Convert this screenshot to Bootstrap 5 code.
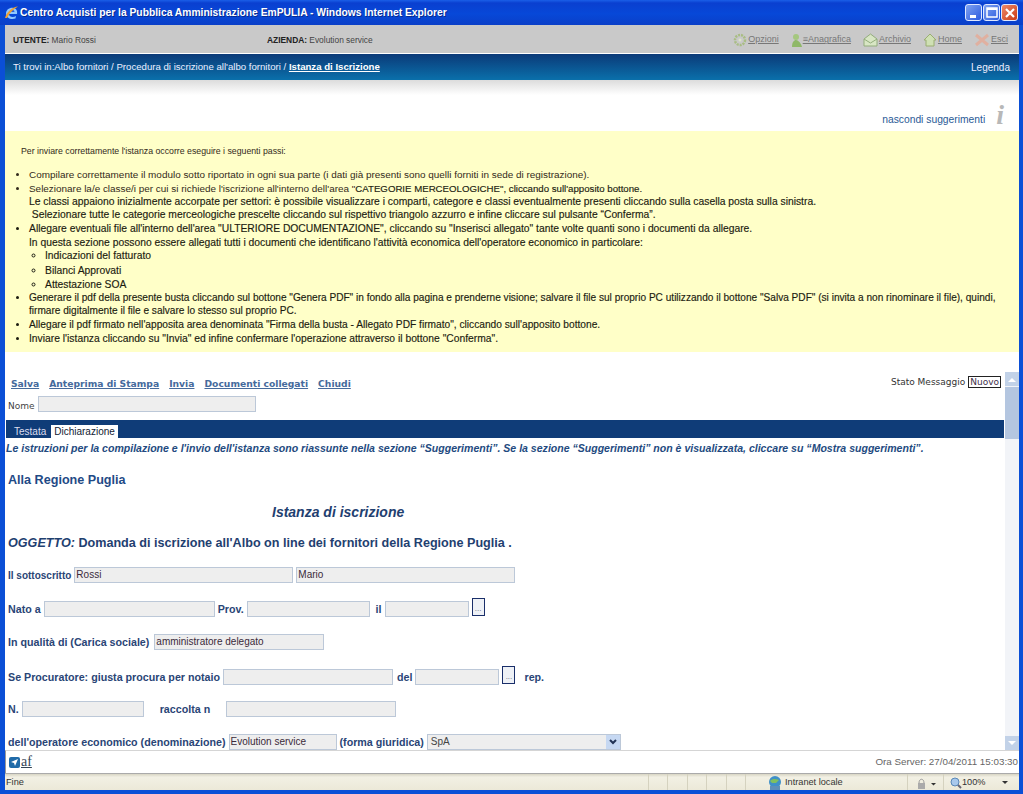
<!DOCTYPE html>
<html lang="it">
<head>
<meta charset="utf-8">
<title>Centro Acquisti per la Pubblica Amministrazione EmPULIA</title>
<link href="https://cdn.jsdelivr.net/npm/bootstrap@5.3.0/dist/css/bootstrap.min.css" rel="stylesheet">
<style>
html,body{margin:0;height:794px;overflow:hidden;background:#fff}
body{font-family:"Liberation Sans",Arial,sans-serif;font-size:10px;color:#222}
.win{width:1023px;height:794px;background:#0b4fd6;padding:0 4px 4px 5px;overflow:hidden}
.pg{background:#fff;height:765px;flex:none}
.ttl{height:25px;flex:none;margin:0 -4px 0 -5px;padding:0 5px 0 4px;background:linear-gradient(#1a5fe8 0,#0a3fd0 12%,#0748d8 55%,#0a3fc8 100%);color:#fff}
.ttl-text{font-family:"Liberation Sans",sans-serif;font-size:10.3px;font-weight:700;text-shadow:1px 1px 0 #062a90;margin-left:0}
.wbtn{width:17px;height:17px;border:1px solid #dfe8ff;border-radius:3px;background:linear-gradient(135deg,#7fa2f0,#2c5be0);margin-left:1px}
.wbtn.cl{background:linear-gradient(135deg,#ee8a6a,#c93a14)}
.usr{height:28px;background:#c9c9c9;padding:2px 11px 0 8px;color:#444;font-size:8.4px}
.usr b{color:#222}
.azi{width:254px}
.tool{color:#777;text-decoration:underline;font-size:9px;margin-left:12px;display:flex;align-items:center}
.tool svg{margin-right:1px}
.crumb{height:26px;margin-top:1px;padding:1px 9px 0 8px;background:linear-gradient(#0b3a78,#0a70ab);color:#eef;font-size:9.65px}
.crumb u{font-weight:700;color:#fff}
.crumb .lgd{font-size:10px}
.shade{height:15px;background:linear-gradient(#dcdcdc,#fff)}
.hint{height:36px;padding-right:15px;color:#2a5a96;font-size:10.3px}
.hint-i{font-family:"Liberation Serif",serif;font-style:italic;font-size:28px;line-height:28px;color:#b8b8b8;margin:0 0 2px 11px;font-weight:700}
.yel{height:221px;background:#ffffc8;padding:14px 0 0 16px;color:#332a1a;font-size:9.93px}
.yel p{margin:0 0 10px 0;font-size:8.75px;line-height:13px}
.yel ul{margin:0;padding:0 0 0 8px;list-style:disc;line-height:13.2px}
.yel ul ul{list-style:circle;padding-left:16px;line-height:14px;margin:0 0 -2px 0}
.yel li{margin-bottom:.8px}
.dk{font-size:10.32px;color:#1c1c10;-webkit-text-stroke:.15px #1c1c10}
.dk2{font-size:9.66px;color:#1c1c10;-webkit-text-stroke:.15px #1c1c10}
.dk3{font-size:10.1px}
.dk4{font-size:10.2px}
.gap{height:20px}
.body-row{height:378px}
.fmain{width:999px;overflow:hidden;height:378px;flex:none}
.acts{padding:0 0 2px 6px;height:24px}
.acts a{font-family:"DejaVu Sans",sans-serif;font-size:9.2px;font-weight:700;color:#456a9c;margin-right:10px}
.stato{font-family:"DejaVu Sans",sans-serif;font-size:9px;color:#333;margin-right:3px}
.stato span{border:1px solid #222;padding:0 1px;margin-left:3px;color:#40304a}
.nome{padding-left:3px;height:24px;font-family:"DejaVu Sans",sans-serif;font-size:9px;color:#444;gap:3px}
.fld{display:block;height:16px;background:#eee;border:1px solid #bcc8d8;color:#3a2a3a;font-size:10px;font-weight:400;line-height:14px;padding:0 1px;flex:none;overflow:hidden;white-space:nowrap}
.tabs{height:18px;background:#0f3c78;margin-left:1px;padding:5px 0 0 4px;font-size:10px;line-height:13px}
.tab-a{color:#dde;padding:0 4px;margin-right:1px}
.tab-b{color:#123;background:#fff;padding:0 3px;display:inline-block}
.frm{padding-left:3px;color:#2a4576;font-weight:700;font-size:10.7px}
.note{font-style:italic;font-size:10.55px;color:#234a80;margin:4px 0 0 -2px;line-height:13px;white-space:nowrap}
.h-a{font-size:12.6px;margin:18px 0 0 0;line-height:14px;color:#1f4a86}
.h-b{font-size:14px;font-style:italic;margin:16px 0 0 264px;line-height:18px;color:#1f4070}
.h-c{font-size:12.6px;margin:13px 0 0 0;line-height:18px;color:#1f4070}
.frow{height:16px;gap:3px;white-space:nowrap}
.frow.r1{margin-top:15px}
.frow.r1 .lb{font-size:10px}
.frow.rn{margin-top:18px}
.frow.ra{margin-top:17px}
.frow.rb{margin-top:19px}
.frow.rc{margin-top:16px}
.il{margin-left:3px}
.ca{margin-left:2px}
.de{margin-left:1px}
.rep{margin-left:6px}
.rac{margin-left:13px}
.racf{margin-left:13px}
.dots{width:13px;height:18px;border:1px solid #1a2f6a;background:#eef1f6;font-size:8px;text-align:center;line-height:20px;color:#667;margin-top:-5px;flex:none;font-weight:400}
.sel{display:flex;height:16px;width:194px;background:#eee;border:1px solid #bcc8d8;font-weight:400;font-size:10px;color:#444;line-height:14px;padding-left:3px;justify-content:space-between;flex:none}
.selb{width:14px;background:#c6d8f2;text-align:center;color:#345;margin:0}
.sb{width:14px;background:#f2f4f8;margin-left:1px;flex:none}
.sb-up,.sb-dn{height:14px;background:#c2d2e8;flex:none;display:flex;align-items:center;justify-content:center}
.sb-th{height:52px;background:#b4c6e0;margin-top:1px}
.foot{height:23px;border-top:1px solid #d5d5d5;padding:0 1px 0 3px;color:#666;font-size:9.8px;background:#fff;border-left:1px solid #999}
.aflogo{font-family:"Liberation Serif",serif;font-size:14px;color:#345;margin-left:1px;line-height:14px;text-decoration:underline}
.stat{height:17px;background:linear-gradient(#d8d5c4 0,#f2f0e4 20%,#ece9d8 100%);color:#333;font-size:9.2px;border-top:1px solid #aaa;padding-left:1px}
.stat-t{padding-top:2px}
.cell{border-left:1px solid #d5d2bf;height:100%;display:flex;align-items:center;flex:none}
.c-s{width:19.400px}
.c-z{width:162px;padding-left:21px}
.c-z svg{margin-right:2px}
.c-l{width:36px;padding-left:6px}
.c-m{width:76px;padding-left:6px}
</style>
</head>
<body>
<div class="win d-flex flex-column">
  <div class="ttl d-flex align-items-center">
    <svg width="16" height="16" viewBox="0 0 16 16"><path d="M13 9H5c0 3 4 4 7 2l-.5 2.500C7 15 2 13 2 8.500 2 4.500 6 2 10 3c3 1 3.500 4 3 6z" fill="#8fc8ff"/><path d="M5.500 6.700H10.500C10 4.500 6.500 4.500 5.500 6.700z" fill="#0a3fd0"/><path d="M1 13C3 6 9 2 14 1.500 10 4 6 7 3 13z" fill="#f0a030"/></svg>
    <span class="ttl-text flex-grow-1">Centro Acquisti per la Pubblica Amministrazione EmPULIA - Windows Internet Explorer</span>
    <span class="wbtn d-flex align-items-end justify-content-center"><svg width="8" height="6"><rect x="0" y="1" width="6" height="3" fill="#fff"/></svg></span>
    <span class="wbtn d-flex align-items-center justify-content-center"><svg width="12" height="11"><rect x="1" y="1" width="10" height="9" fill="none" stroke="#fff" stroke-width="1.500"/><rect x="1" y="1" width="10" height="2" fill="#fff"/></svg></span>
    <span class="wbtn cl d-flex align-items-center justify-content-center"><svg width="12" height="12"><path d="M2 2l8 8M10 2l-8 8" stroke="#fff" stroke-width="2.200"/></svg></span>
  </div>
  <div class="pg d-flex flex-column">
  <div class="usr d-flex align-items-center">
    <span class="azi"><b>UTENTE:</b> Mario Rossi</span>
    <span class="flex-grow-1"><b>AZIENDA:</b> Evolution service</span>
    <span class="tool"><svg width="14" height="14" viewBox="0 0 14 14"><circle cx="7" cy="7" r="5" fill="none" stroke="#a9bd84" stroke-width="2.500" stroke-dasharray="2 1"/><circle cx="7" cy="7" r="1.500" fill="#dde4c8"/></svg>Opzioni</span>
    <span class="tool"><svg width="11" height="14" viewBox="0 0 11 14"><circle cx="5" cy="4" r="3" fill="#a5c77f"/><path d="M1 14c0-5 2-7 4-7s5 3 6 7z" fill="#8fb868"/></svg>≡Anagrafica</span>
    <span class="tool"><svg width="15" height="14" viewBox="0 0 15 14"><path d="M1 6l6.500-5L14 6v7H1z" fill="#d8e6c4" stroke="#93ad7c"/><path d="M1 6l6.500 4L14 6" fill="none" stroke="#93ad7c"/></svg>Archivio</span>
    <span class="tool"><svg width="14" height="14" viewBox="0 0 14 14"><path d="M1 7l6-6 6 6h-2v6H3V7z" fill="#cfe0b4" stroke="#9aae72"/></svg>Home</span>
    <span class="tool"><svg width="16" height="14" viewBox="0 0 16 14"><path d="M2 2l12 10M14 2L2 12" stroke="#e0b0a0" stroke-width="3"/></svg>Esci</span>
  </div>
  <div class="crumb d-flex align-items-center justify-content-between">
    <span>Ti trovi in:Albo fornitori / Procedura di iscrizione all'albo fornitori / <u>Istanza di Iscrizione</u></span>
    <span class="lgd">Legenda</span>
  </div>
  <div class="shade"></div>
  <div class="hint d-flex align-items-end justify-content-end">
    <span class="mb-1">nascondi suggerimenti</span><span class="hint-i">i</span>
  </div>
  <div class="yel">
    <p>Per inviare correttamente l'istanza occorre eseguire i seguenti passi:</p>
    <ul>
      <li>Compilare correttamente il modulo sotto riportato in ogni sua parte (i dati già presenti sono quelli forniti in sede di registrazione).</li>
      <li>Selezionare la/e classe/i per cui si richiede l'iscrizione all'interno dell'area "<span class="dk2">CATEGORIE MERCEOLOGICHE", cliccando sull'apposito bottone.</span><br><span class="dk">Le classi appaiono inizialmente accorpate per settori: è possibile visualizzare i comparti, categore e classi eventualmente presenti cliccando sulla casella posta sulla sinistra.<br>&nbsp;Selezionare tutte le categorie merceologiche prescelte cliccando sul rispettivo triangolo azzurro e infine cliccare sul pulsante “Conferma”.</span></li>
      <li class="dk">Allegare eventuali file all'interno dell'area "ULTERIORE DOCUMENTAZIONE", cliccando su "Inserisci allegato" tante volte quanti sono i documenti da allegare.<br>In questa sezione possono essere allegati tutti i documenti che identificano l'attività economica dell'operatore economico in particolare:
        <ul><li>Indicazioni del fatturato</li><li>Bilanci Approvati</li><li>Attestazione SOA</li></ul>
      </li>
      <li class="dk dk3">Generare il pdf della presente busta cliccando sul bottone "Genera PDF" in fondo alla pagina e prenderne visione; salvare il file sul proprio PC utilizzando il bottone "Salva PDF" (si invita a non rinominare il file), quindi,<br>firmare digitalmente il file e salvare lo stesso sul proprio PC.</li>
      <li class="dk dk4">Allegare il pdf firmato nell'apposita area denominata "Firma della busta - Allegato PDF firmato", cliccando sull'apposito bottone.</li>
      <li class="dk">Inviare l'istanza cliccando su "Invia" ed infine confermare l'operazione attraverso il bottone "Conferma".</li>
    </ul>
  </div>
  <div class="gap"></div>
  <div class="body-row d-flex">
    <div class="fmain">
      <div class="acts d-flex justify-content-between align-items-center">
        <span><a href="#">Salva</a><a href="#">Anteprima di Stampa</a><a href="#">Invia</a><a href="#">Documenti collegati</a><a href="#">Chiudi</a></span>
        <span class="stato">Stato Messaggio<span>Nuovo</span></span>
      </div>
      <div class="nome d-flex"><span class="pt-1">Nome</span><span class="fld" style="width:218px"></span></div>
      <div class="tabs"><span class="tab-a">Testata</span><span class="tab-b">Dichiarazione</span></div>
      <div class="frm">
        <p class="note">Le istruzioni per la compilazione e l'invio dell'istanza sono riassunte nella sezione “Suggerimenti”. Se la sezione “Suggerimenti” non è visualizzata, cliccare su “Mostra suggerimenti”.</p>
        <div class="h-a">Alla Regione Puglia</div>
        <div class="h-b">Istanza di iscrizione</div>
        <div class="h-c"><i>OGGETTO:</i> Domanda di iscrizione all'Albo on line dei fornitori della Regione Puglia .</div>
        <div class="frow r1 d-flex align-items-center"><span class="lb">Il sottoscritto</span><span class="fld" style="width:219px">Rossi</span><span class="fld" style="width:219px">Mario</span></div>
        <div class="frow rn d-flex align-items-center"><span>Nato a</span><span class="fld" style="width:171px"></span><span>Prov.</span><span class="fld" style="width:123px"></span><span class="il">il</span><span class="fld" style="width:84px"></span><span class="dots">...</span></div>
        <div class="frow ra d-flex align-items-center"><span>In qualità di (Carica sociale)</span><span class="fld ca" style="width:170px">amministratore delegato</span></div>
        <div class="frow rb d-flex align-items-center"><span>Se Procuratore: giusta procura per notaio</span><span class="fld" style="width:170px"></span><span class="de">del</span><span class="fld" style="width:84px"></span><span class="dots">...</span><span class="rep">rep.</span></div>
        <div class="frow rc d-flex align-items-center"><span>N.</span><span class="fld" style="width:122px"></span><span class="rac">raccolta n</span><span class="fld racf" style="width:170px"></span></div>
        <div class="frow ra d-flex align-items-center"><span>dell'operatore economico (denominazione)</span><span class="fld" style="width:108px">Evolution service</span><span>(forma giuridica)</span><span class="sel"><span>SpA</span><span class="selb"><svg width="10" height="10"><path d="M2 3l3 3 3-3" fill="none" stroke="#235" stroke-width="2"/></svg></span></span></div>
      </div>
    </div>
    <div class="sb d-flex flex-column">
      <div class="sb-up"><svg width="8" height="5"><path d="M0 5l4-4 4 4z" fill="#fff"/></svg></div>
      <div class="sb-th"></div>
      <div class="flex-grow-1"></div>
      <div class="sb-dn"><svg width="8" height="5"><path d="M0 0l4 4 4-4z" fill="#fff"/></svg></div>
    </div>
  </div>
  <div class="foot d-flex align-items-center justify-content-between">
    <span class="d-flex align-items-center"><svg width="11" height="11" viewBox="0 0 11 11"><rect width="11" height="11" rx="2" fill="#1f6aa8"/><path d="M2 5l7-3-3 7-1-3z" fill="#fff"/></svg><span class="aflogo">af</span></span>
    <span>Ora Server: 27/04/2011 15:03:30</span>
  </div>
  <div class="stat d-flex align-items-center">
    <span class="flex-grow-1 stat-t">Fine</span>
    <span class="cell c-s"></span><span class="cell c-s"></span><span class="cell c-s"></span><span class="cell c-s"></span><span class="cell c-s"></span>
    <span class="cell c-z stat-t"><svg width="16" height="15" viewBox="0 0 16 15"><circle cx="8" cy="6" r="6" fill="#3f90c8"/><path d="M3 5c3-3 6-2 9-1l-3 3H5z" fill="#7fc060"/><rect x="3" y="10" width="10" height="4" fill="#5d8fb8"/></svg>Intranet locale</span>
    <span class="cell c-l stat-t"><svg width="22" height="13" viewBox="0 0 22 13"><rect x="4" y="6" width="7" height="6" fill="#aaa"/><path d="M5 6c0-5 5-5 5 0" fill="none" stroke="#999"/><path d="M17 6h5l-2.500 2.500z" fill="#333"/></svg></span>
    <span class="cell c-m stat-t"><svg width="12" height="12" viewBox="0 0 12 12"><circle cx="5" cy="5" r="4" fill="#a8c8ec" stroke="#5a88b8"/><path d="M8 8l3 3" stroke="#667" stroke-width="2"/></svg>100%<svg width="6" height="4" class="ms-3"><path d="M0 0h6L3 3z" fill="#333"/></svg></span>
  </div>
  </div>
</div>
</body>
</html>
